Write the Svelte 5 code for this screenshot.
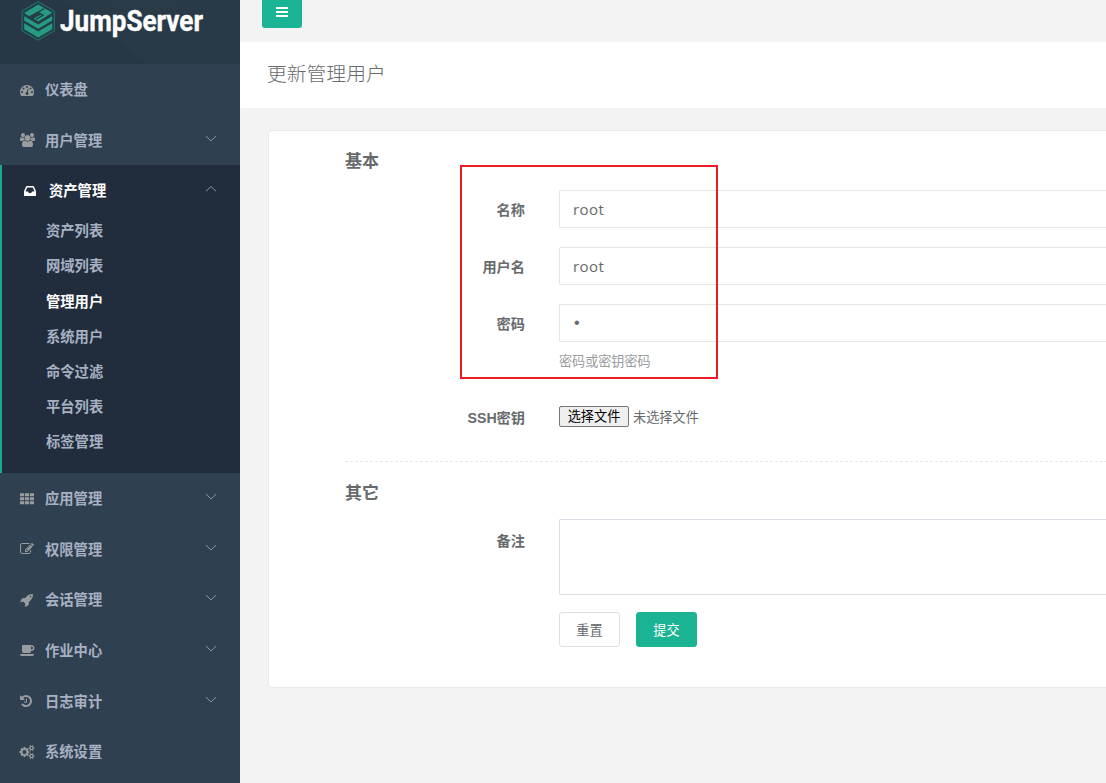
<script lang="ts">
  interface MenuItem {
    label: string;
    icon: string;
    width?: number;
    arrow?: boolean;
    children?: string[];
  }

  // Font Awesome 4 outlines, 1792 units to 14px
  const icons: Record<string, string> = {
    dashboard:
      'M384 1152q0-53-37.5-90.5t-90.5-37.5-90.5 37.5-37.5 90.5 37.5 90.5 90.5 37.5 90.5-37.5 37.5-90.5zm192-448q0-53-37.5-90.5t-90.5-37.5-90.5 37.5-37.5 90.5 37.5 90.5 90.5 37.5 90.5-37.5 37.5-90.5zm428 481l101-382q6-26-7.5-48.5t-38.5-29.5-48 6.5-30 39.5l-101 382q-60 5-107 43.5t-63 98.5q-20 77 20 146t117 89 146-20 89-117q16-60-6-117t-72-91zm660-33q0-53-37.5-90.5t-90.5-37.5-90.5 37.5-37.5 90.5 37.5 90.5 90.5 37.5 90.5-37.5 37.5-90.5zm-640-640q0-53-37.5-90.5t-90.5-37.5-90.5 37.5-37.5 90.5 37.5 90.5 90.5 37.5 90.5-37.5 37.5-90.5zm448 192q0-53-37.5-90.5t-90.5-37.5-90.5 37.5-37.5 90.5 37.5 90.5 90.5 37.5 90.5-37.5 37.5-90.5zm320 448q0 261-141 483-19 29-54 29h-1402q-35 0-54-29-141-221-141-483 0-182 71-348t191-286 286-191 348-71 348 71 286 191 191 286 71 348z',
    group:
      'M593 896q-162 5-265 128h-134q-82 0-138-40.5t-56-118.5q0-353 124-353 6 0 43.5 21t97.5 42.5 119 21.5q67 0 133-23-5 37-5 66 0 139 81 256zm1071 637q0 120-73 189.5t-194 69.5h-874q-121 0-194-69.5t-73-189.5q0-53 3.5-103.5t14-109 26.5-108.5 43-97.5 62-81 85.5-53.5 111.5-20q10 0 43 21.5t73 48 107 48 135 21.5 135-21.5 107-48 73-48 43-21.5q61 0 111.5 20t85.5 53.5 62 81 43 97.5 26.5 108.5 14 109 3.5 103.5zm-1024-1277q0 106-75 181t-181 75-181-75-75-181 75-181 181-75 181 75 75 181zm704 384q0 159-112.5 271.5t-271.5 112.5-271.5-112.5-112.5-271.5 112.5-271.5 271.5-112.5 271.5 112.5 112.5 271.5zm576 225q0 78-56 118.5t-138 40.5h-134q-103-123-265-128 81-117 81-256 0-29-5-66 66 23 133 23 59 0 119-21.5t97.5-42.5 43.5-21q124 0 124 353zm-128-609q0 106-75 181t-181 75-181-75-75-181 75-181 181-75 181 75 75 181z',
    inbox:
      'M1151 960h316q-1-3-2.5-8.5t-2.5-7.5l-212-496h-708l-212 496q-1 3-2.5 8.5t-2.5 7.5h316l95 192h320zm513 30v482q0 26-19 45t-45 19h-1408q-26 0-45-19t-19-45v-482q0-62 25-123l238-552q10-25 36.5-42t52.5-17h832q26 0 52.5 17t36.5 42l238 552q25 61 25 123z',
    th: 'M0 160h528v384h-528zM632 160h528v384h-528zM1264 160h528v384h-528zM0 672h528v384h-528zM632 672h528v384h-528zM1264 672h528v384h-528zM0 1184h528v384h-528zM632 1184h528v384h-528zM1264 1184h528v384h-528z',
    edit: 'M888 1184l116-116-152-152-116 116v56h96v96h56zm440-720q-16-16-33 1l-350 350q-17 17-1 33t33-1l350-350q17-17 1-33zm80 594v190q0 119-84.5 203.5t-203.5 84.5h-832q-119 0-203.5-84.5t-84.5-203.5v-832q0-119 84.5-203.5t203.5-84.5h832q63 0 117 25 15 7 18 23 3 17-9 29l-49 49q-14 14-32 8-23-6-45-6h-832q-66 0-113 47t-47 113v832q0 66 47 113t113 47h832q66 0 113-47t47-113v-126q0-13 9-22l64-64q15-15 35-7t20 29zm-96-738l288 288-672 672h-288v-288zm444 132l-92 92-288-288 92-92q28-28 68-28t68 28l152 152q28 28 28 68t-28 68z',
    rocket:
      'M1440 448q0-40-28-68t-68-28-68 28-28 68 28 68 68 28 68-28 28-68zm224-288q0 249-75.5 430.5t-253.5 360.5q-81 80-195 176l-20 379q-2 16-16 26l-384 224q-7 4-16 4-12 0-23-9l-64-64q-13-14-8-32l85-276-281-281-276 85q-3 1-9 1-14 0-23-9l-64-64q-17-19-5-39l224-384q10-14 26-16l379-20q96-114 176-195 188-187 358-258t431-71q14 0 24 9.5t10 22.5z',
    coffee:
      'M1664 512q0-80-56-136t-136-56h-64v384h64q80 0 136-56t56-136zm-1664 768h1792q0 106-75 181t-181 75h-1280q-106 0-181-75t-75-181zm1856-768q0 159-112.5 271.5t-271.5 112.5h-64v32q0 92-66 158t-158 66h-704q-92 0-158-66t-66-158v-736q0-26 19-45t45-19h1152q159 0 271.5 112.5t112.5 271.5z',
    history:
      'M1536 896q0 156-61 298t-164 245-245 164-298 61q-172 0-327-72.5t-264-204.5q-7-10-6.5-22.5t8.5-20.5l137-138q10-9 25-9 16 2 23 12 73 95 179 147t225 52q104 0 198.5-40.5t163.5-109.5 109.5-163.5 40.5-198.5-40.5-198.5-109.5-163.5-163.5-109.5-198.5-40.5q-98 0-188 35.5t-160 101.5l137 138q31 30 14 69-17 40-59 40h-448q-26 0-45-19t-19-45v-448q0-42 40-59 39-17 69 14l130 129q107-101 244.5-156.5t284.5-55.5q156 0 298 61t245 164 164 245 61 298zm-640-288v448q0 14-9 23t-23 9h-320q-14 0-23-9t-9-23v-64q0-14 9-23t23-9h224v-352q0-14 9-23t23-9h64q14 0 23 9t9 23z',
    cogs: 'M832 896q0-106-75-181t-181-75-181 75-75 181 75 181 181 75 181-75 75-181zm768 512q0-52-38-90t-90-38-90 38-38 90q0 53 37.5 90.5t90.5 37.5 90.5-37.5 37.5-90.5zm0-1024q0-52-38-90t-90-38-90 38-38 90q0 53 37.5 90.5t90.5 37.5 90.5-37.5 37.5-90.5zm-384 421v185q0 10-7 19.5t-16 10.5l-155 24q-11 35-32 76 34 48 90 115 7 11 7 20 0 12-7 19-23 30-82.5 89.5t-78.5 59.5q-11 0-21-7l-115-90q-37 19-77 31-11 108-23 155-7 24-30 24h-186q-11 0-20-7.5t-10-17.5l-23-153q-34-10-75-31l-118 89q-7 7-20 7-11 0-21-8-144-133-144-160 0-9 7-19 10-14 41-53t47-61q-23-44-35-82l-152-24q-10-1-17-9.5t-7-19.5v-185q0-10 7-19.5t16-10.5l155-24q11-35 32-76-34-48-90-115-7-11-7-20 0-12 7-20 22-30 82-89t79-59q11 0 21 7l115 90q34-18 77-32 11-108 23-154 7-24 30-24h186q11 0 20 7.5t10 17.5l23 153q34 10 75 31l118-89q8-7 20-7 11 0 21 8 144 133 144 160 0 8-7 19-12 16-42 54t-45 60q23 48 34 82l152 23q10 2 17 10.5t7 19.5zm640 533v140q0 16-149 31-12 27-30 52 51 113 51 138 0 4-4 7-122 71-124 71-8 0-46-47t-52-68q-20 2-30 2t-30-2q-14 21-52 68t-46 47q-2 0-124-71-4-3-4-7 0-25 51-138-18-25-30-52-149-15-149-31v-140q0-16 149-31 13-29 30-52-51-113-51-138 0-4 4-7 4-2 35-20t59-34 30-16q8 0 46 46.5t52 67.5q20-2 30-2t30 2q51-71 92-112l6-2q4 0 124 70 4 3 4 7 0 25-51 138 17 23 30 52 149 15 149 31zm0-1024v140q0 16-149 31-12 27-30 52 51 113 51 138 0 4-4 7-122 71-124 71-8 0-46-47t-52-68q-20 2-30 2t-30-2q-14 21-52 68t-46 47q-2 0-124-71-4-3-4-7 0-25 51-138-18-25-30-52-149-15-149-31v-140q0-16 149-31 13-29 30-52-51-113-51-138 0-4 4-7 4-2 35-20t59-34 30-16q8 0 46 46.5t52 67.5q20-2 30-2t30 2q51-71 92-112l6-2q4 0 124 70 4 3 4 7 0 25-51 138 17 23 30 52 149 15 149 31z',
  };

  const menu: MenuItem[] = [
    { label: '仪表盘', icon: 'dashboard' },
    { label: '用户管理', icon: 'group', arrow: true },
    {
      label: '资产管理',
      icon: 'inbox',
      arrow: true,
      children: ['资产列表', '网域列表', '管理用户', '系统用户', '命令过滤', '平台列表', '标签管理'],
    },
    { label: '应用管理', icon: 'th', arrow: true },
    { label: '权限管理', icon: 'edit', arrow: true },
    { label: '会话管理', icon: 'rocket', arrow: true },
    { label: '作业中心', icon: 'coffee', arrow: true },
    { label: '日志审计', icon: 'history', arrow: true },
    { label: '系统设置', icon: 'cogs' },
  ];

  const current = '管理用户';

  let name = $state('root');
  let username = $state('root');
  let password = $state('•');
  let comment = $state('');
</script>

<div class="app">
  <nav class="sidebar">
    <div class="brand">
      <svg class="brand-svg" width="240" height="64" viewBox="0 0 240 64">
        <path d="M0 0H64L148 64H0Z" fill="#263645" opacity=".5" />
        <path d="M110 0H200L120 26Z" fill="#2c3e4c" opacity=".4" />
        <path d="M38.2 1.6 54.3 11V30.8L38.2 40.2 22.1 30.8V11Z" fill="#213f49" stroke="#22786f" stroke-width="1" />
        <path d="M38.2 4.6 52.2 12.8 38.2 21.4 33.6 18.6 41.6 14.2 37.4 11.6 29.2 16.2 24.2 13Z" fill="#279b82" />
        <path d="M44.2 8.6 38 12.2 43 15.2 36 19.4" fill="none" stroke="#213f49" stroke-width="1.3" />
        <path d="M24.2 16.2 38.2 24.4 52.2 16.2V20.6L38.2 28.8 24.2 20.6Z" fill="#279b82" />
        <path d="M24.2 23.2 38.2 31.4 52.2 23.2V29.2L38.2 37.4 24.2 29.2Z" fill="#279b82" />
        <text x="60" y="31" textLength="143" lengthAdjust="spacingAndGlyphs">JumpServer</text>
      </svg>
    </div>
    <ul class="menu">
      {#each menu as item}
        <li class:active={item.children}>
          <a class="entry" href="#top">
            <svg class="icon" width="16" height="14" viewBox="0 0 2048 1792">
              <path d={icons[item.icon]} />
            </svg>
            <span>{item.label}</span>
            {#if item.arrow}
              <svg class="arrow" width="12" height="8" viewBox="0 0 12 8">
                <path d={item.children ? 'M1 6.2 6 1.5 11 6.2' : 'M1 1.2 6 5.9 11 1.2'} />
              </svg>
            {/if}
          </a>
          {#if item.children}
            <ul class="submenu">
              {#each item.children as child}
                <li><a class:current={child === current} href="#top">{child}</a></li>
              {/each}
            </ul>
          {/if}
        </li>
      {/each}
    </ul>
  </nav>

  <main>
    <div class="topbar">
      <button class="toggle" aria-label="menu">
        <svg width="12" height="10" viewBox="0 0 12 10">
          <path d="M0 0h12v2H0zM0 4h12v2H0zM0 8h12v2H0z" fill="#fff" />
        </svg>
      </button>
    </div>
    <header><h2>更新管理用户</h2></header>

    <form class="card">
      <h3>基本</h3>
      <div class="row">
        <label for="name">名称</label>
        <input id="name" bind:value={name} />
      </div>
      <div class="row">
        <label for="username">用户名</label>
        <input id="username" bind:value={username} />
      </div>
      <div class="row">
        <label for="password">密码</label>
        <div class="field">
          <input id="password" class="password" bind:value={password} />
          <p class="help">密码或密钥密码</p>
        </div>
      </div>
      <div class="row file-row">
        <label for="key">SSH密钥</label>
        <div class="file">
          <button id="key" type="button">选择文件</button>
          <span>未选择文件</span>
        </div>
      </div>
      <div class="divider"></div>
      <h3>其它</h3>
      <div class="row comment-row">
        <label for="comment">备注</label>
        <textarea id="comment" bind:value={comment}></textarea>
      </div>
      <div class="actions">
        <button class="btn" type="reset">重置</button>
        <button class="btn primary" type="button">提交</button>
      </div>
    </form>
  </main>

  <div class="highlight"></div>
</div>

<style>
  :global(body) {
    margin: 0;
    overflow: hidden;
  }

  .app {
    position: relative;
    display: flex;
    width: 1106px;
    height: 783px;
    overflow: hidden;
    background: #f3f3f3;
    color: #676a6c;
    font-family: 'Open Sans', 'Noto Sans CJK SC', sans-serif;
    font-size: 13px;
  }

  .app * {
    box-sizing: border-box;
  }

  button,
  input,
  textarea {
    font-family: inherit;
    color: inherit;
  }

  .sidebar {
    width: 240px;
    flex-shrink: 0;
    background: #2f4050;
  }

  .brand {
    height: 64px;
    background: #283947;
  }

  .brand-svg {
    display: block;
  }

  .brand text {
    font-family: Roboto, sans-serif;
    font-size: 29px;
    font-weight: 700;
    fill: #fff;
    stroke: #fff;
    stroke-width: 0.4px;
  }

  ul {
    list-style: none;
    margin: 0;
    padding: 0;
  }

  .entry {
    display: flex;
    align-items: center;
    height: 50.55px;
    padding: 0 23px 0 20px;
    color: #a7b1c2;
    font-size: 14.3px;
    font-weight: 600;
    text-decoration: none;
  }

  .entry span {
    margin: -1px 0 0 9px;
  }

  .icon {
    fill: #999c9e;
    overflow: visible;
    margin-top: 1px;
  }

  .arrow {
    margin: -2px 0 0 auto;
    fill: none;
    stroke: #8794a0;
    stroke-width: 1;
  }

  .active {
    height: 308px;
    background: #212d3c;
    border-left: 2px solid #19aa8d;
  }

  .active .entry {
    padding-left: 21px;
    color: #fff;
  }

  .active .icon {
    fill: #fff;
  }

  .active .entry span {
    margin-left: 10px;
  }

  .submenu {
    margin-top: -3.5px;
  }

  .submenu a {
    display: flex;
    align-items: center;
    height: 35.2px;
    padding-left: 44px;
    color: #a7b1c2;
    font-size: 14.3px;
    font-weight: 600;
    text-decoration: none;
  }

  .submenu .current {
    color: #fff;
  }

  main {
    flex: 1;
    min-width: 0;
  }

  .topbar {
    height: 42px;
    padding-left: 22px;
  }

  .toggle {
    display: flex;
    justify-content: center;
    width: 40px;
    height: 28px;
    padding: 7px 0 0;
    border: 0;
    border-radius: 0 0 3px 3px;
    background: #1ab394;
  }

  header {
    height: 66px;
    padding: 18px 0 0 27px;
    background: #fff;
  }

  h2 {
    margin: 0;
    font-size: 19.8px;
    font-weight: 300;
    line-height: 28px;
  }

  .card {
    width: 1000px;
    height: 558px;
    margin: 22px 0 0 28px;
    padding: 20px 0 0 76px;
    border: 1px solid #e7eaec;
    border-radius: 4px;
    background: #fff;
  }

  h3 {
    margin: 0;
    font-size: 17px;
    font-weight: 700;
    line-height: 20px;
  }

  .row {
    display: flex;
    gap: 34px;
    margin-top: 19px;
  }

  label {
    width: 180px;
    flex-shrink: 0;
    font-family: 'Liberation Sans', 'Noto Sans CJK SC', sans-serif;
    font-size: 14.2px;
    font-weight: 700;
    line-height: 40px;
    height: 38px;
    text-align: right;
  }

  .field {
    flex: 1;
  }

  input,
  textarea {
    display: block;
    flex: 1;
    width: 100%;
    height: 38px;
    margin: 0;
    padding: 0 13px;
    border: 1px solid #e5e6e7;
    border-radius: 1px;
    outline: none;
    background: #fff;
    font-size: 15px;
    letter-spacing: 0.4px;
    resize: none;
  }

  .password {
    padding-left: 14px;
    font-family: 'Liberation Sans', sans-serif;
    font-size: 16px;
  }

  .help {
    margin: 9px 0 0;
    color: #999c9e;
    font-size: 13.1px;
    line-height: 20px;
  }

  .file-row {
    margin-top: 27px;
  }

  .file {
    display: flex;
    align-items: center;
    gap: 4px;
    height: 37px;
    font-size: 13.2px;
  }

  .file span {
    margin-top: -1px;
  }

  .file button {
    width: 70px;
    height: 21px;
    padding: 0;
    border: 1px solid #767676;
    border-radius: 2px;
    background: #efefef;
    color: #000;
    font-size: 13.2px;
    line-height: 17px;
  }

  .divider {
    height: 1px;
    margin: 25px 0 21px;
    background: repeating-linear-gradient(90deg, #e7eaec 0 3px, transparent 3px 5px);
  }

  .comment-row {
    margin-top: 16px;
  }

  .comment-row label {
    line-height: 45px;
  }

  textarea {
    height: 76px;
    border-color: #dcdfe6;
  }

  .actions {
    display: flex;
    gap: 16px;
    margin: 17px 0 0 214px;
  }

  .btn {
    width: 61px;
    height: 35px;
    padding: 0;
    border: 1px solid #dcdfe6;
    border-radius: 3px;
    background: #fff;
    font-size: 13.2px;
  }

  .primary {
    border-color: #1ab394;
    background: #1ab394;
    color: #fff;
  }

  /* callout frame over the credential fields */
  .highlight {
    position: absolute;
    left: 460px;
    top: 165px;
    width: 258px;
    height: 214px;
    border: 2px solid #ed1c24;
    pointer-events: none;
  }
</style>
